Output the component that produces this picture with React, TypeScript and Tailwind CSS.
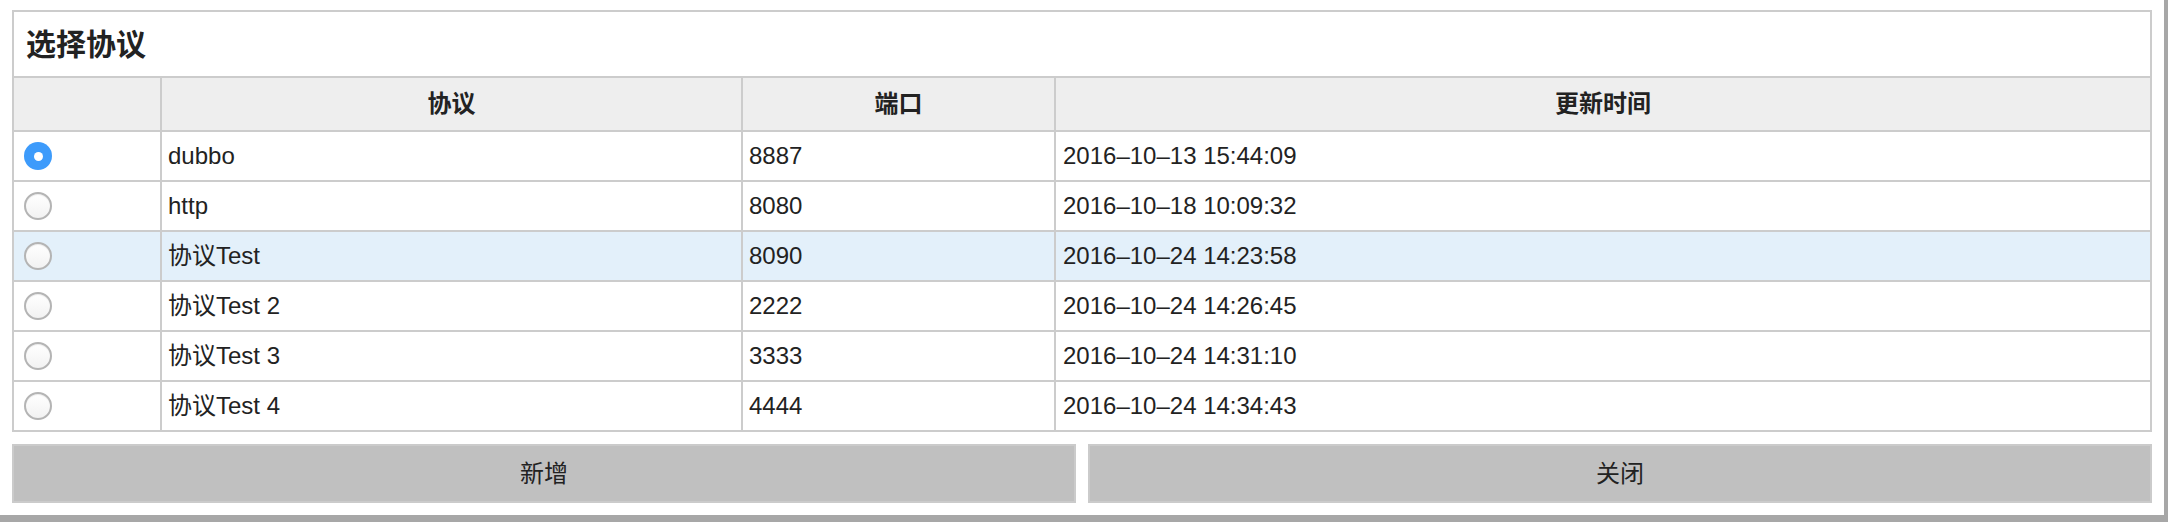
import React from "react";

type TRow = {
  name: string;
  port: string;
  time: string;
};

const rows: TRow[] = [
  { name: "dubbo", port: "8887", time: "2016–10–13 15:44:09" },
  { name: "http", port: "8080", time: "2016–10–18 10:09:32" },
  { name: "协议Test", port: "8090", time: "2016–10–24 14:23:58" },
  { name: "协议Test 2", port: "2222", time: "2016–10–24 14:26:45" },
  { name: "协议Test 3", port: "3333", time: "2016–10–24 14:31:10" },
  { name: "协议Test 4", port: "4444", time: "2016–10–24 14:34:43" },
];

const Radio = ({ checked }: { checked: boolean }) => {
  return checked ? (
    <div className="w-[28px] h-[28px] rounded-full bg-[#3d9bfb] flex items-center justify-center">
      <div className="w-[9px] h-[9px] rounded-full bg-white" />
    </div>
  ) : (
    <div className="w-[28px] h-[28px] rounded-full border-2 border-[#b4b4b4] bg-gradient-to-b from-white to-[#f2f2f2] shadow-[inset_0_1px_1px_rgba(0,0,0,0.08)]" />
  );
};

export default function App() {
  return (
    <div
      className="w-[2168px] h-[522px] bg-[#a7a7a7] text-[#222] text-[24px]"
      style={{ fontFamily: '"Liberation Sans", "Noto Sans CJK SC", sans-serif' }}
    >
      <div className="w-[2164px] h-[515px] bg-white pt-[10px] px-[12px] flex flex-col">
        <div className="border-2 border-[#cccccc] flex flex-col">
          <div className="h-[66px] border-b-2 border-[#cccccc] flex items-center px-[12px] text-[30px] font-bold">
            选择协议
          </div>
          <div className="h-[52px] bg-[#eeeeee] flex font-bold">
            <div className="w-[146px]" />
            <div className="w-[581px] border-l-2 border-[#cccccc] flex items-center justify-center">
              协议
            </div>
            <div className="w-[313px] border-l-2 border-[#cccccc] flex items-center justify-center">
              端口
            </div>
            <div className="flex-1 border-l-2 border-[#cccccc] flex items-center justify-center">
              更新时间
            </div>
          </div>
          {rows.map((row, i) => (
            <div
              key={row.name}
              className={`h-[50px] border-t-2 border-[#cccccc] flex ${
                i === 2 ? "bg-[#e3f0fa]" : "bg-white"
              }`}
            >
              <div className="w-[146px] flex items-center pl-[10px]">
                <Radio checked={i === 0} />
              </div>
              <div className="w-[581px] border-l-2 border-[#cccccc] flex items-center pl-[6px]">
                {row.name}
              </div>
              <div className="w-[313px] border-l-2 border-[#cccccc] flex items-center pl-[6px]">
                {row.port}
              </div>
              <div className="flex-1 border-l-2 border-[#cccccc] flex items-center pl-[7px]">
                {row.time}
              </div>
            </div>
          ))}
        </div>
        <div className="flex gap-[12px] mt-[12px]">
          <button className="flex-1 h-[59px] bg-[#c0c0c0] border-2 border-[#cbcbcb] text-[24px] text-[#222]">
            新增
          </button>
          <button className="flex-1 h-[59px] bg-[#c0c0c0] border-2 border-[#cbcbcb] text-[24px] text-[#222]">
            关闭
          </button>
        </div>
      </div>
    </div>
  );
}
